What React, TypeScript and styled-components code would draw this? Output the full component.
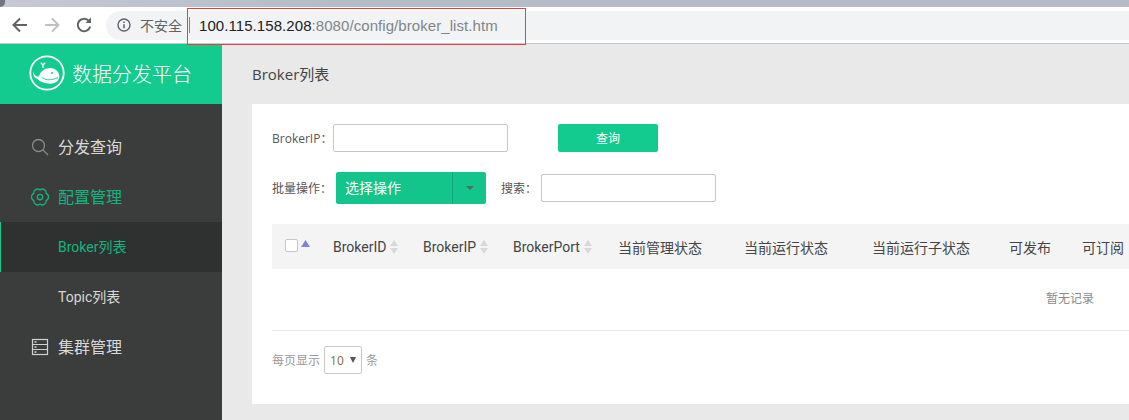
import React from "react";
import styled, { createGlobalStyle } from "styled-components";

const Global = createGlobalStyle`
  html, body { margin: 0; padding: 0; height: 420px; overflow: hidden; background: #e9e9e9; }
  body { font-family: "Open Sans", "Noto Sans CJK SC", sans-serif; }
  * { box-sizing: border-box; }
`;

const Page = styled.div`
  position: relative;
  width: 1129px;
  height: 420px;
  overflow: hidden;
  display: flex;
  flex-direction: column;
`;
const TabStrip = styled.div`
  position: relative;
  height: 7px;
  flex: none;
  background: linear-gradient(90deg, #c6c9d4 0%, #b6bbc8 30%, #b6bbc8 100%);
  &::before {
    content: "";
    position: absolute;
    left: 0;
    top: 0;
    width: 5px;
    height: 7px;
    background: #6f7483;
    border-bottom-right-radius: 5px;
  }
`;
const Toolbar = styled.div`
  height: 37px;
  flex: none;
  background: #fff;
  border-bottom: 1px solid #c8c8c8;
  display: flex;
  align-items: center;
  padding-left: 10px;
`;
const NavIcon = styled.svg`
  width: 20px;
  height: 20px;
  flex: none;
  margin-right: 12px;
  fill: none;
  stroke-width: 2;
`;
const Omnibox = styled.div`
  flex: 1;
  height: 29px;
  background: #f1f3f4;
  border-radius: 15px 0 0 15px;
  display: flex;
  align-items: center;
  padding-left: 11px;
  font-family: "Liberation Sans", "Noto Sans CJK SC", sans-serif;
  font-size: 15px;
  letter-spacing: 0.07px;
`;
const Insecure = styled.span`
  margin-left: 9px;
  color: #5f6368;
  font-size: 14px;
  letter-spacing: 0;
  font-family: "Noto Sans CJK SC", sans-serif;
`;
const Divider = styled.span`
  width: 1px;
  height: 16px;
  background: #80868b;
  margin: 0 9px 0 7px;
`;
const Host = styled.span`
  color: #202124;
`;
const UrlRest = styled.span`
  color: #80868b;
`;
const Highlight = styled.div`
  position: absolute;
  left: 187px;
  top: 8px;
  width: 339px;
  height: 37px;
  border: 1px solid #f23c3c;
  pointer-events: none;
`;
const Body = styled.div`
  flex: 1;
  display: flex;
  min-height: 0;
`;
const Sidebar = styled.aside`
  width: 222px;
  flex: none;
  background: #3b3d3c;
`;
const Brand = styled.div`
  height: 60px;
  background: #13ca8f;
  display: flex;
  align-items: center;
  padding: 0 0 2px 29px;
  gap: 7px;
  color: #fff;
  font-family: "Noto Sans CJK SC", sans-serif;
  font-size: 20px;
  font-weight: 300;
`;
const Menu = styled.nav`
  padding-top: 18px;
`;
const MenuItem = styled.div<{ $on?: boolean; $sub?: boolean }>`
  height: 50px;
  display: flex;
  align-items: center;
  gap: 9px;
  padding-left: ${(p) => (p.$sub ? 58 : 31)}px;
  padding-bottom: 2px;
  color: ${(p) => (p.$on ? "#12b57f" : "#d8d8d8")};
  font-family: Roboto, "Noto Sans CJK SC", sans-serif;
  font-size: ${(p) => (p.$sub ? 14 : 16)}px;
`;
const MenuIcon = styled.svg`
  width: 18px;
  height: 18px;
  margin-top: 2px;
  flex: none;
  fill: none;
`;
const ActiveItem = styled(MenuItem)`
  background: #2f3130;
  border-left: 1px solid #13ca8f;
  padding-left: 57px;
`;
const Main = styled.main`
  flex: 1;
  min-width: 0;
  padding-left: 30px;
`;
const Title = styled.h1`
  margin: 0;
  height: 60px;
  line-height: 60px;
  font-size: 15px;
  font-weight: 400;
  color: #444;
`;
const Card = styled.section`
  width: 900px;
  height: 300px;
  background: #fff;
  padding: 20px 0 0 20px;
  font-size: 12px;
  color: #555;
`;
const SearchRow = styled.div`
  display: flex;
  align-items: center;
  height: 28px;
`;
const OpsRow = styled.div`
  display: flex;
  align-items: center;
  height: 32px;
  margin-top: 20px;
`;
const Label = styled.span<{ $w: number }>`
  color: #555;
  white-space: nowrap;
  width: ${(p) => p.$w}px;
  flex: none;
`;
const TextBox = styled.input<{ $w: number }>`
  width: ${(p) => p.$w}px;
  height: 28px;
  border: 1px solid #c8c8c8;
  border-radius: 2px;
  background: #fff;
  padding: 0;
  flex: none;
`;
const QueryButton = styled.button`
  width: 100px;
  height: 28px;
  margin-left: 50px;
  border: none;
  border-radius: 2px;
  background: #13ca8f;
  color: #fff;
  font: inherit;
  padding: 0;
`;
const OpsSelect = styled.div`
  width: 150px;
  height: 32px;
  margin-right: 15px;
  background: #13c48b;
  border-radius: 2px;
  display: flex;
  color: #fff;
  font-size: 14px;
  font-weight: 400;
  flex: none;
`;
const OpsText = styled.div`
  width: 117px;
  padding-left: 9px;
  line-height: 31px;
  border-right: 1px solid #10a878;
`;
const OpsCaret = styled.div`
  flex: 1;
  display: flex;
  align-items: center;
  justify-content: center;
  &::after {
    content: "";
    border: 4px solid transparent;
    border-top: 4px solid #47705f;
    border-bottom: 0;
  }
`;
const TableHead = styled.div`
  margin-top: 20px;
  height: 45px;
  background: #f4f4f4;
  display: grid;
  grid-template-columns: 61px 90px 90px 105px 126px 128px 137px 73px 60px;
  align-items: center;
  font-family: Roboto, "Noto Sans CJK SC", sans-serif;
  font-size: 14px;
  color: #444;
  white-space: nowrap;
`;
const HeadCell = styled.div`
  display: flex;
  align-items: center;
  gap: 4px;
`;
const CheckCell = styled.div`
  display: flex;
  align-items: center;
  padding-left: 13px;
  gap: 3px;
  margin-top: -3px;
`;
const CheckBox = styled.span`
  width: 13px;
  height: 13px;
  border: 1px solid #c6c6c6;
  border-radius: 2px;
  background: #fff;
`;
const Sort = styled.svg`
  width: 8px;
  height: 14px;
  flex: none;
`;
const UpTriangle = styled.svg`
  width: 9px;
  height: 7px;
  margin-top: -4px;
  fill: #8080e0;
`;
const EmptyRow = styled.div`
  height: 62px;
  border-bottom: 1px solid #e8e8e8;
  padding-left: 774px;
  line-height: 60px;
  color: #8a8a8a;
`;
const Pager = styled.div`
  display: flex;
  align-items: center;
  height: 22px;
  margin-top: 18px;
  gap: 4px;
  color: #999;
`;
const PageSize = styled.div`
  width: 38px;
  height: 28px;
  border: 1px solid #c8c8c8;
  border-radius: 2px;
  display: flex;
  align-items: center;
  padding-left: 5px;
  gap: 6px;
  color: #8a6a4a;
  flex: none;
  &::after {
    content: "";
    border: 3.5px solid transparent;
    border-top: 6px solid #555;
    border-bottom: 0;
  }
`;
const WhaleMark = styled.svg`
  width: 36px;
  height: 36px;
  flex: none;
`;

const Whale = () => (
  <WhaleMark viewBox="0 0 36 36">
    <circle cx="18" cy="18" r="16.7" fill="none" stroke="#fff" strokeWidth="1.8" />
    <path
      d="M4.5 16.5C5 20.5 7.5 22 10 21.5 11 16.5 16 13 21 13c6 0 10 4.5 9.3 9.5C29.5 27 24.5 29.5 19.5 28.5 14.5 28 10.5 26.5 8.5 24 5.5 23 3.5 20.5 4.5 16.5z"
      fill="#fff"
    />
    <path d="M14 13v-3M14 10l-2.2-2.2M14 10l2.2-2.2" fill="none" stroke="#fff" strokeWidth="1.3" />
    <circle cx="23" cy="18" r="1" fill="#13ca8f" />
    <path d="M13 22.5c4 3 10 3 16 0" fill="none" stroke="#13ca8f" strokeWidth="0.9" />
  </WhaleMark>
);

const SortIcon = () => (
  <Sort viewBox="0 0 8 14">
    <path d="M4 0l4 6H0zM4 14l4-6H0z" fill="#d8d8d8" />
  </Sort>
);

export default function App() {
  return (
    <Page>
      <Global />
      <TabStrip />
      <Toolbar>
        <NavIcon viewBox="0 0 20 20" stroke="#5f6368">
          <path d="M17 10H4M10 3.5L3.5 10l6.5 6.5" />
        </NavIcon>
        <NavIcon viewBox="0 0 20 20" stroke="#bdc1c6">
          <path d="M3 10h13M10 3.5l6.5 6.5-6.5 6.5" />
        </NavIcon>
        <NavIcon viewBox="0 0 20 20" stroke="#5f6368">
          <path d="M15 6a6.3 6.3 0 1 0 1.2 5.5" />
          <path d="M17 2.5v5.5h-5.5z" fill="#5f6368" stroke="none" />
        </NavIcon>
        <Omnibox>
          <svg width="14" height="14" viewBox="0 0 14 14" style={{ flex: "none" }}>
            <circle cx="7" cy="7" r="6" fill="none" stroke="#5f6368" strokeWidth="1.4" />
            <path d="M7 6.2v4M7 3.4v1.5" stroke="#5f6368" strokeWidth="1.5" />
          </svg>
          <Insecure>不安全</Insecure>
          <Divider />
          <Host>100.115.158.208</Host>
          <UrlRest>:8080/config/broker_list.htm</UrlRest>
        </Omnibox>
      </Toolbar>
      <Body>
        <Sidebar>
          <Brand>
            <Whale />
            数据分发平台
          </Brand>
          <Menu>
            <MenuItem>
              <MenuIcon viewBox="0 0 18 18" stroke="#8a8a8a" strokeWidth="1.3">
                <circle cx="7.5" cy="7.5" r="6" />
                <path d="M12 12l5 5" />
              </MenuIcon>
              分发查询
            </MenuItem>
            <MenuItem $on>
              <MenuIcon viewBox="1 1 16 16" stroke="#12b57f" strokeWidth="1.2">
                <path d="M9 2.7A3.4 3.4 0 0 1 14.46 5.85 3.4 3.4 0 0 1 14.46 12.15 3.4 3.4 0 0 1 9 15.3 3.4 3.4 0 0 1 3.54 12.15 3.4 3.4 0 0 1 3.54 5.85 3.4 3.4 0 0 1 9 2.7z" strokeLinejoin="round" />
                <circle cx="9" cy="9" r="2.4" />
              </MenuIcon>
              配置管理
            </MenuItem>
            <ActiveItem $on $sub>Broker列表</ActiveItem>
            <MenuItem $sub>Topic列表</MenuItem>
            <MenuItem>
              <MenuIcon viewBox="0 0 18 18" stroke="#d0d0d0" strokeWidth="1.2">
                <rect x="1.5" y="1.5" width="15" height="15" />
                <path d="M1.5 6.5h15M1.5 11.5h15" />
                <path d="M3.5 4h2M3.5 9h2M3.5 14h2" strokeWidth="1.4" />
              </MenuIcon>
              集群管理
            </MenuItem>
          </Menu>
        </Sidebar>
        <Main>
          <Title>Broker列表</Title>
          <Card>
            <SearchRow>
              <Label $w={61}>BrokerIP：</Label>
              <TextBox $w={175} />
              <QueryButton>查询</QueryButton>
            </SearchRow>
            <OpsRow>
              <Label $w={64}>批量操作：</Label>
              <OpsSelect>
                <OpsText>选择操作</OpsText>
                <OpsCaret />
              </OpsSelect>
              <Label $w={40}>搜索：</Label>
              <TextBox $w={175} />
            </OpsRow>
            <TableHead>
              <CheckCell>
                <CheckBox />
                <UpTriangle viewBox="0 0 9 7"><path d="M4.5 0L9 7H0z" /></UpTriangle>
              </CheckCell>
              <HeadCell>BrokerID<SortIcon /></HeadCell>
              <HeadCell>BrokerIP<SortIcon /></HeadCell>
              <HeadCell>BrokerPort<SortIcon /></HeadCell>
              <HeadCell>当前管理状态</HeadCell>
              <HeadCell>当前运行状态</HeadCell>
              <HeadCell>当前运行子状态</HeadCell>
              <HeadCell>可发布</HeadCell>
              <HeadCell>可订阅</HeadCell>
            </TableHead>
            <EmptyRow>暂无记录</EmptyRow>
            <Pager>
              每页显示
              <PageSize>10</PageSize>
              条
            </Pager>
          </Card>
        </Main>
      </Body>
      <Highlight />
    </Page>
  );
}
